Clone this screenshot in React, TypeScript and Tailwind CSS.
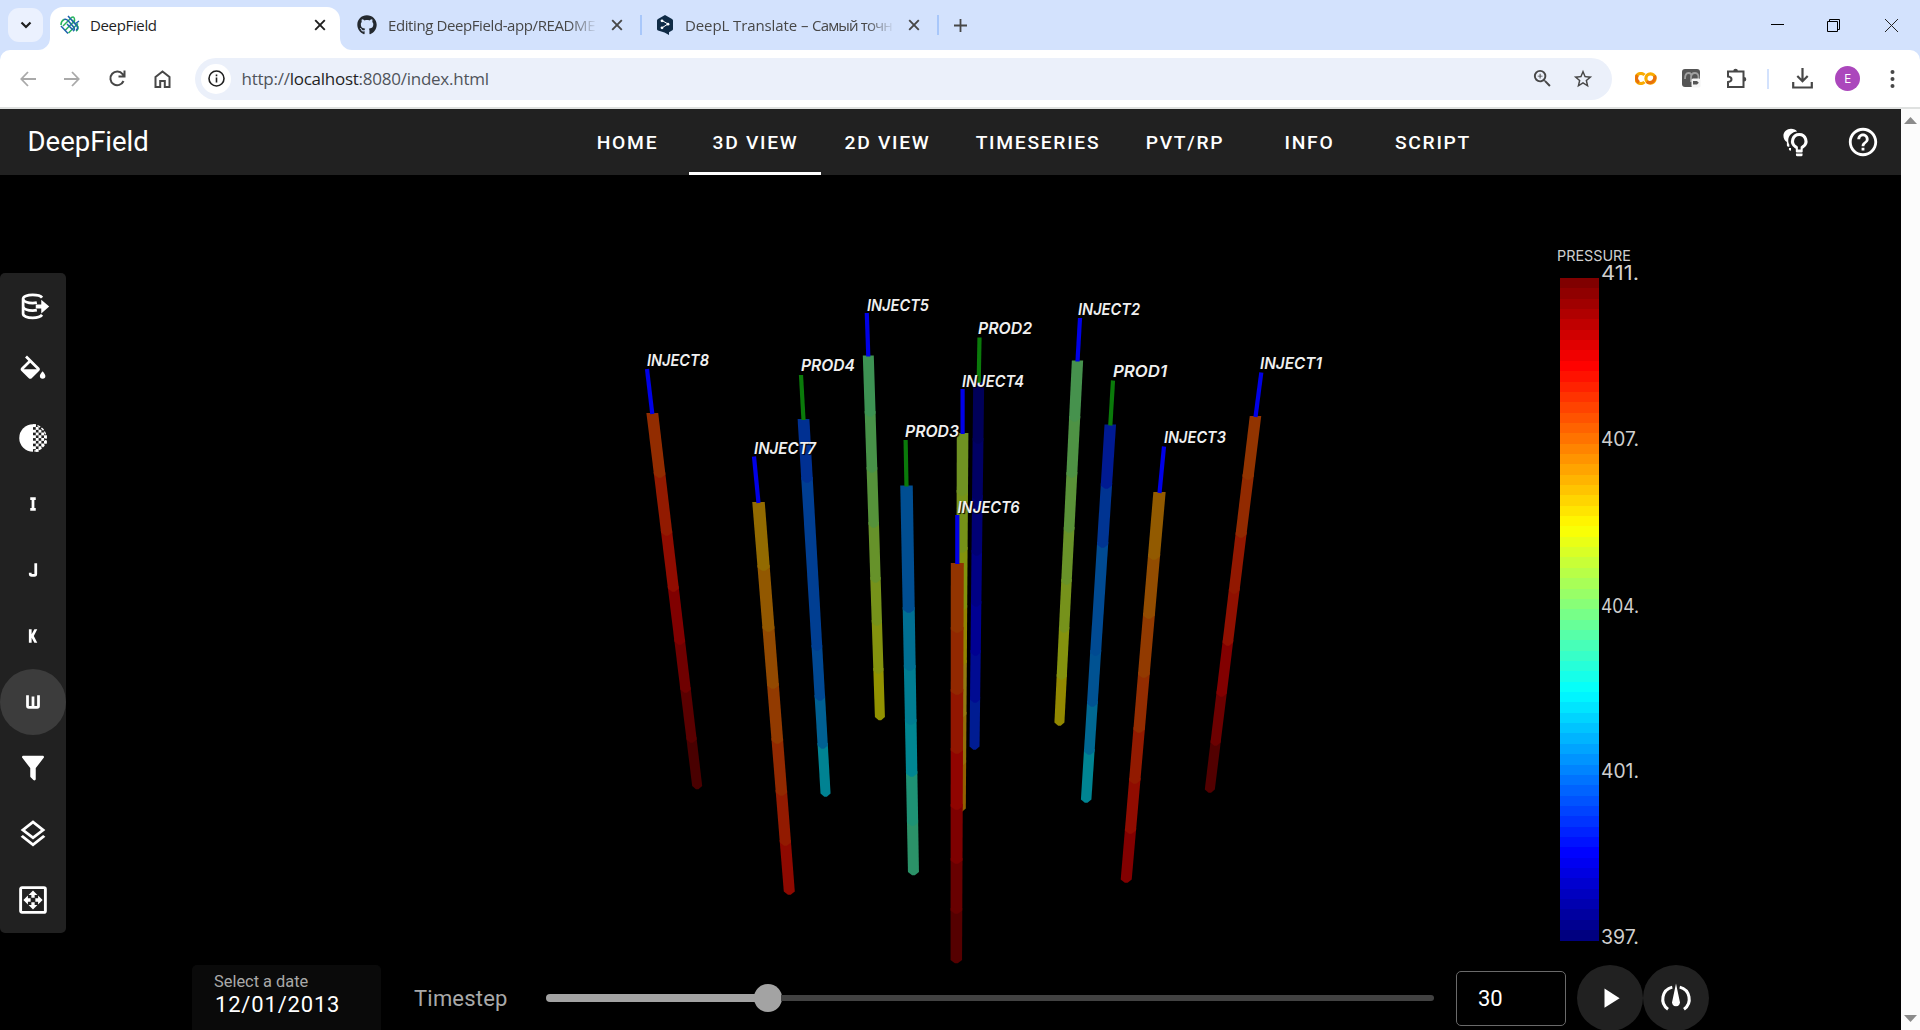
import React from "react";
import { MdZoomIn, MdStarBorder, MdOutlineHelpOutline } from "react-icons/md";
import { FaGithub } from "react-icons/fa";

type Well = {
  name: string;
  label: [number, number];
  stem: [number, number];
  top: [number, number];
  bottom: [number, number];
  widths: [number, number];
  breaks: number[];
  colors: string[];
};

const WELLS: Well[] = [
  { name: "PROD2", label: [978, 334], stem: [979.5, 337.5], top: [978.7, 382], bottom: [974.5, 749], widths: [11, 10], breaks: [443, 500, 555, 606, 655, 702], colors: ["#000058", "#000064", "#000074", "#000084", "#000092", "#000b92", "#001c92"] },
  { name: "INJECT4", label: [962, 387], stem: [962.6, 389], top: [962.6, 433], bottom: [960.8, 811], widths: [11.6, 10], breaks: [495, 552, 610, 665, 717, 765], colors: ["#6f9222", "#769218", "#82920c", "#928400", "#927a10", "#926e08", "#926000"] },
  { name: "PROD1", label: [1113, 377], stem: [1113, 380.5], top: [1110.3, 424.5], bottom: [1086, 802], widths: [11.5, 10.5], breaks: [488, 547, 655, 706, 754], colors: ["#001a92", "#003492", "#004a92", "#005292", "#006892", "#008492"] },
  { name: "INJECT2", label: [1078, 315], stem: [1080, 318], top: [1077.5, 360.5], bottom: [1059.3, 725], widths: [11.3, 10], breaks: [421, 477, 532, 584, 632, 679], colors: ["#46924d", "#4e9244", "#5a9238", "#699228", "#76921b", "#84920e", "#928800"] },
  { name: "INJECT1", label: [1260, 369], stem: [1261.3, 372.5], top: [1255.5, 416], bottom: [1209.5, 792], widths: [11.5, 10], breaks: [479, 537, 593, 645, 696, 745], colors: ["#923400", "#922a00", "#921800", "#901000", "#820000", "#6c0000", "#520000"] },
  { name: "INJECT5", label: [867, 311], stem: [866.8, 313], top: [868.3, 355.5], bottom: [880, 719.5], widths: [11, 10], breaks: [416, 472, 527, 582, 625, 673], colors: ["#3d9253", "#479248", "#55923a", "#66922a", "#76921a", "#84920e", "#929200"] },
  { name: "PROD4", label: [801, 371], stem: [801, 375], top: [803.5, 419], bottom: [825.7, 796], widths: [11.8, 10], breaks: [482, 650, 700, 748], colors: ["#003092", "#003e92", "#004892", "#006092", "#008292"] },
  { name: "INJECT8", label: [647, 366], stem: [647, 369], top: [652.3, 413], bottom: [697.5, 788.5], widths: [11.8, 10], breaks: [477, 535, 591, 644, 692, 742], colors: ["#922c00", "#921a00", "#900c00", "#800000", "#6f0000", "#5a0000", "#490000"] },
  { name: "INJECT3", label: [1164, 443], stem: [1164, 446.5], top: [1159.5, 492], bottom: [1126, 882], widths: [12.3, 11], breaks: [559, 618, 677, 732, 783, 833], colors: ["#925a00", "#924c00", "#923a00", "#922c00", "#921a00", "#900c00", "#820000"] },
  { name: "INJECT7", label: [754, 454], stem: [754, 456.5], top: [758.5, 502], bottom: [789.5, 894], widths: [12.5, 11], breaks: [570, 631, 688, 743, 795, 845], colors: ["#926a00", "#925800", "#924900", "#923a00", "#922900", "#921a00", "#8e0900"] },
  { name: "PROD3", label: [905, 437], stem: [905.6, 440], top: [906.5, 485.5], bottom: [913.5, 874.5], widths: [12.5, 11], breaks: [612, 670, 724, 776, 825], colors: ["#004e92", "#006f92", "#007d92", "#008692", "#1e9274", "#2b9268"] },
  { name: "INJECT6", label: [957.5, 513], stem: [957.3, 515], top: [957.3, 563], bottom: [956.3, 962.5], widths: [13, 11.5], breaks: [632, 694, 753, 809, 863, 913], colors: ["#923400", "#922800", "#921600", "#900400", "#7e0000", "#680000", "#550000"] },
];

const TOP = 175;

function jet(t: number) {
  const c = (v: number) => Math.round(255 * Math.max(0, Math.min(1, v)));
  return `rgb(${c(1.5 - Math.abs(4 * t - 3))},${c(1.5 - Math.abs(4 * t - 2))},${c(1.5 - Math.abs(4 * t - 1))})`;
}

function WellShape({ w }: { w: Well }) {
  const [tx, ty] = w.top;
  const [bx, by] = w.bottom;
  const at = (y: number) => {
    const k = (y - ty) / (by - ty);
    return { x: tx + (bx - tx) * k, h: (w.widths[0] + (w.widths[1] - w.widths[0]) * k) / 2 };
  };
  const edges = [ty, ...w.breaks, by];
  const parts = w.colors.map((color, i) => {
    const y0 = i === 0 ? ty : edges[i] - 5;
    const y1 = edges[i + 1];
    const a = at(y0);
    const b = at(y1 - 2.5);
    return (
      <path
        key={i}
        fill={color}
        d={`M${a.x - a.h} ${y0}H${a.x + a.h}L${b.x + b.h} ${y1 - 2.5}L${b.x + b.h * 0.25} ${y1 + 0.8}H${b.x - b.h * 0.25}L${b.x - b.h} ${y1 - 2.5}Z`}
      />
    );
  });
  const stemColor = w.name.startsWith("PROD") ? "#0a7a0a" : "#0000e6";
  return (
    <g>
      {parts.reverse()}
      <line x1={w.stem[0]} y1={w.stem[1]} x2={tx} y2={ty + 1} stroke={stemColor} strokeWidth={4.2} />
    </g>
  );
}

function Scene() {
  const ticks: [string, number][] = [["411.", 280], ["407.", 446], ["404.", 612.5], ["401.", 777.5], ["397.", 944]];
  const edge = (i: number) => Math.round(278 + (i * 662.5) / 64);
  return (
    <svg className="absolute inset-0" width="1901" height="855" viewBox={`0 ${TOP} 1901 855`}>
      {WELLS.map((w) => (
        <WellShape key={w.name} w={w} />
      ))}
      <g className="[text-shadow:1px_1px_1px_#000]" fontFamily="Inter, 'Liberation Sans', sans-serif" fontWeight="600" fontStyle="italic" fontSize="16.4" fill="#f0f0f0">
        {WELLS.map((w) => (
          <text key={w.name} x={w.label[0]} y={w.label[1]} textLength={w.name.startsWith("P") ? 54 : 62} lengthAdjust="spacingAndGlyphs">{w.name}</text>
        ))}
      </g>
      {Array.from({ length: 64 }, (_, i) => (
        <rect key={i} x="1560" y={edge(i)} width="39" height={edge(i + 1) - edge(i)} fill={jet((63 - i) / 63)} shapeRendering="crispEdges" />
      ))}
      <g fontFamily="Inter, 'Liberation Sans', sans-serif" fill="#cfcfcf">
        <text x="1557" y="261" fontSize="15" textLength="74" lengthAdjust="spacingAndGlyphs">PRESSURE</text>
        {ticks.map(([t, y]) => (
          <text key={t} x="1601" y={y} fontSize="19.5" textLength="38" lengthAdjust="spacingAndGlyphs">{t}</text>
        ))}
      </g>
    </svg>
  );
}

const ICON_BOX = "-0.364 -0.364 24.728 24.728";

function Mdi({ d }: { d: string }) {
  return (
    <svg width="34" height="34" viewBox={ICON_BOX} fill="currentColor" fillRule="evenodd">
      <path d={d} />
    </svg>
  );
}

function DatabaseExport() {
  return (
    <svg width="34" height="34" viewBox={ICON_BOX} fill="none" stroke="currentColor" strokeWidth="2">
      <path d="M18.6 5.900C17.600 4.600 15 3.900 11.800 3.900 7.800 3.900 4.800 5.100 4.800 6.800V17.600c0 1.700 3 3 7 3 3.200 0 5.800-.8 6.800-2.100" />
      <path d="M4.800 7.400c.9 1.600 3.700 2.500 7 2.500 1 0 2-.1 3-.3M4.800 12.800c.9 1.600 3.700 2.500 7 2.500 1 0 2-.1 3-.3" />
      <path d="M14 10.900h4V7.400L23.800 12.400 18 17.400v-3.500h-4z" fill="currentColor" stroke="none" />
    </svg>
  );
}

function Opacity() {
  const dots: [number, number][] = [];
  for (let r = 0; r < 10; r++)
    for (let c = 0; c < 5; c++) if ((r + c) % 2 === 0) dots.push([12 + c * 2, 2 + r * 2]);
  return (
    <svg width="34" height="34" viewBox={ICON_BOX} fill="currentColor">
      <path d="M12 2a10 10 0 0 0 0 20z" />
      <path d="M12 2.500a9.500 9.500 0 0 1 0 19" fill="none" stroke="currentColor" strokeWidth="1" strokeDasharray="2.200 1.100" />
      {dots.filter(([x, y]) => Math.hypot(x + 1 - 12, y + 1 - 12) < 9.8).map(([x, y]) => (
        <rect key={`${x}-${y}`} x={x} y={y} width="2.100" height="2.100" />
      ))}
    </svg>
  );
}

function Recenter() {
  return (
    <svg width="34" height="34" viewBox={ICON_BOX} fill="currentColor">
      <rect x="3" y="3" width="18" height="18" rx="1" fill="none" stroke="currentColor" strokeWidth="2.1" />
      <path d="M12 5l3.200 3.300h-2v2h-2.400v-2h-2zM12 19l3.200-3.300h-2v-2h-2.400v2h-2zM5 12l3.300-3.200v2h2v2.400h-2v2zM19 12l-3.300-3.200v2h-2v2.400h2v2z" />
    </svg>
  );
}

const SIDE: React.ReactNode[] = [
  <DatabaseExport />,
  <Mdi d="M19,11.5C19,11.5 17,13.67 17,15A2,2 0 0,0 19,17A2,2 0 0,0 21,15C21,13.67 19,11.5 19,11.5M5.21,10L10,5.21L14.79,10M16.56,8.94L7.62,0L6.21,1.41L8.59,3.79L3.44,8.94C2.85,9.5 2.85,10.47 3.44,11.06L8.94,16.56C9.23,16.85 9.62,17 10,17C10.38,17 10.77,16.85 11.06,16.56L16.56,11.06C17.15,10.47 17.15,9.5 16.56,8.94Z" />,
  <Opacity />,
  <Mdi d="M10,7V9H11V15H10V17H14V15H13V9H14V7H10Z" />,
  <Mdi d="M11,17A2,2 0 0,1 9,15V14H11V15H13V7H15V15A2,2 0 0,1 13,17H11Z" />,
  <Mdi d="M9,7H11V10.700L13,7H15.100L12.600,12L15.100,17H13L11,13.300V17H9Z" />,
  <Mdi d="M9,17A2,2 0 0,1 7,15V7H9V15H11V8H13V15H15V7H17V15A2,2 0 0,1 15,17H9Z" />,
  <Mdi d="M14,12V19.88C14.04,20.18 13.94,20.5 13.71,20.71C13.32,21.1 12.69,21.1 12.3,20.71L10.29,18.7C10.06,18.47 9.96,18.16 10,17.87V12H9.97L4.21,4.62C3.87,4.19 3.95,3.56 4.38,3.22C4.57,3.08 4.78,3 5,3V3H19V3C19.22,3 19.43,3.08 19.62,3.22C20.05,3.56 20.13,4.19 19.79,4.62L14.03,12H14Z" />,
  <Mdi d="M12,18.54L19.37,12.8L21,14.07L12,21.07L3,14.07L4.62,12.81L12,18.54M12,16L3,9L12,2L21,9L12,16M12,4.53L6.26,9L12,13.47L17.74,9L12,4.53Z" />,
  <Recenter />,
];

function Close({ dark }: { dark?: boolean }) {
  return (
    <svg className="shrink-0" width="12" height="12" viewBox="0 0 12 12" stroke={dark ? "#1f1f1f" : "#474747"} strokeWidth="1.900">
      <path d="M1.200 1.200l9.600 9.600M10.800 1.200L1.200 10.800" />
    </svg>
  );
}

function TabStrip() {
  return (
    <div className="flex h-[50px] bg-[#d3e2fd] text-[15px] text-[#474747]">
      <div className="mt-2 ml-2 flex h-[34px] w-[35px] items-center justify-center rounded-[11px] bg-[#ebf1fe]">
        <svg width="12" height="8" viewBox="0 0 12 8" fill="none" stroke="#1f1f1f" strokeWidth="2.200"><path d="M1.500 1.500L6 6l4.500-4.500" /></svg>
      </div>
      <div className="relative mt-[7px] ml-[7px] flex h-[43px] w-[290px] items-center rounded-t-[13px] bg-white pr-[14px] pb-[7px] pl-[10px] text-[#1f1f1f]">
        <svg className="absolute bottom-0 -left-3" width="12" height="12"><path d="M12 0v12H0A12 12 0 0 0 12 0" fill="#fff" /></svg>
        <svg className="absolute -right-3 bottom-0" width="12" height="12"><path d="M0 0v12h12A12 12 0 0 1 0 0" fill="#fff" /></svg>
        <svg width="20" height="20" viewBox="0 0 20 20" fill="none" strokeWidth="1.500">
          <g stroke="#27b45c"><path d="M3 11L11.500 2.500q2.500-1.500 3 1.500t-2 4L5 15.500M8.500 18l9.500-9.500M1 10q0-4 3-5.500M12 5l6 6.500q.5 3-2 4.500" /></g>
          <g stroke="#1f63ad"><path d="M8 1l9 10q1.500 3-1 4M4 4.500q2-1 4 1l6 7q1 3-1 3.500M1 11l7 7.500M7 9l6 6M15 9l4-3" /></g>
        </svg>
        <span className="ml-[10px] grow tracking-[-0.35px]">DeepField</span>
        <Close dark />
      </div>
      <div className="flex h-[50px] grow items-center">
        <FaGithub className="ml-[17px] shrink-0 text-[#24292f]" size={20} />
        <div className="ml-[11px] w-[210px] overflow-hidden whitespace-nowrap [mask-image:linear-gradient(to_right,black_86%,transparent)] tracking-[-0.4px]">Editing DeepField-app/README</div>
        <div className="ml-[13px]"><Close /></div>
        <div className="ml-[17px] h-5 w-[2px] bg-[#a8c7fa]" />
        <svg className="ml-[15px]" width="16" height="20" viewBox="0 0 16 20">
          <path d="M8 0l7 4q1 .6 1 1.600v8.400q0 1-1 1.600L12 17.300V20l-4.500-2.600L1 15.600Q0 15 0 14V5.600Q0 4.600 1 4z" fill="#0f2b46" />
          <path d="M5 5.500l6 3.500-6 3.800" fill="none" stroke="#fff" strokeWidth="1" />
          <g fill="#fff"><circle cx="5" cy="5.800" r="1.400" /><circle cx="11" cy="9.200" r="1.400" /><circle cx="5" cy="12.800" r="1.400" /></g>
        </svg>
        <div className="ml-[12px] w-[210px] overflow-hidden whitespace-nowrap [mask-image:linear-gradient(to_right,black_86%,transparent)] tracking-[-0.1px]">DeepL Translate – <span className="tracking-[-0.85px]">Самый точн</span></div>
        <div className="ml-[13px]"><Close /></div>
        <div className="ml-[17px] h-5 w-[2px] bg-[#a8c7fa]" />
        <svg className="ml-[15px]" width="13" height="13" stroke="#474747" strokeWidth="1.800"><path d="M6.500 0v13M0 6.500h13" /></svg>
        <div className="ml-auto flex items-center pr-[22px]">
          <svg width="13" height="13" stroke="#000"><path d="M0 5.500h13" /></svg>
          <svg className="ml-[43px]" width="13" height="13" fill="none" stroke="#000"><path d="M.5 2.500h10v10H.5zM2.500 2.500v-2h10v10h-2" /></svg>
          <svg className="ml-[45px]" width="13" height="13" stroke="#222"><path d="M0 0l13 13M13 0L0 13" /></svg>
        </div>
      </div>
    </div>
  );
}

function Toolbar() {
  return (
    <div className="bg-[#d3e2fd]">
      <div className="flex h-[57px] items-center rounded-t-[10px] bg-white text-[#474747]">
        <svg className="ml-5" width="16" height="16" fill="none" stroke="#a9a9a9" strokeWidth="1.800"><path d="M16 8H1.500M8 1L1.300 8 8 15" /></svg>
        <svg className="ml-7" width="16" height="16" fill="none" stroke="#a9a9a9" strokeWidth="1.800"><path d="M0 8h14.500M8 1l6.700 7L8 15" /></svg>
        <svg className="ml-[29px]" width="17" height="17" fill="none" stroke="#474747" strokeWidth="2"><path d="M14.500 11A6.800 6.800 0 1 1 13.600 4.200L15 6M15.500 0.500v6H9.500" /></svg>
        <svg className="ml-[28px]" width="17" height="18" fill="none" stroke="#474747" strokeWidth="2"><path d="M1.500 7L8.500 1.500l7 5.500v10h-4.700v-6H6.200v6H1.500z" /></svg>
        <div className="ml-[24px] flex h-[42px] w-[1417px] items-center rounded-full bg-[#ebf0fa] pr-[18px] pl-[6px]">
          <div className="flex size-[30px] items-center justify-center rounded-full bg-white">
            <svg width="17" height="17" fill="none" stroke="#1f1f1f" strokeWidth="1.600"><circle cx="8.500" cy="8.500" r="7.500" /><path d="M8.500 7.500v5M8.500 4.500v1.700" /></svg>
          </div>
          <span className="ml-[10.500px] grow pt-px text-[17px] tracking-[-0.25px] whitespace-nowrap text-[#50545a]">http://<span className="text-[#1f1f1f]">localhost</span>:8080/index.html</span>
          <MdZoomIn size={23} />
          <MdStarBorder className="ml-[18px]" size={22} />
        </div>
        <svg className="ml-[23px]" width="22" height="13" fill="none" strokeWidth="3.200">
          <path d="M9.500 10A5 5 0 1 1 9.500 3" stroke="#f9ab00" /><circle cx="15.500" cy="6.500" r="4.600" stroke="#f9ab00" /><path d="M19.500 3.600A5 5 0 0 1 11.800 9.400M2.500 3.200A5 5 0 0 0 4 10.500" stroke="#e8710a" />
        </svg>
        <svg className="ml-[25px]" width="19" height="19"><rect width="18" height="18" rx="3" fill="#555" /><path d="M3 10Q3 4 6.500 4T9 8v5M9 9q0-5 4-5t3.500 6" fill="none" stroke="#a0a0a0" strokeWidth="1.800" /><rect x="9.500" y="9.500" width="9" height="9" rx="1.500" fill="#f4f4f4" /><path d="M11 12h4l1.800 1.800L15 15.500h-4z" fill="#555" /></svg>
        <svg className="ml-[25px]" width="21" height="21" viewBox="0 0 21 21" fill="none" stroke="#474747" strokeWidth="2"><path d="M2 3.500h15.500v15.500H2v-5q3.500-.5 3.500-2.800T2 8.500z" /><path d="M7.300 3a2.300 2.300 0 0 1 4.600 0zM18 9a2.300 2.300 0 0 1 0 4.600z" fill="#474747" stroke="none" /></svg>
        <div className="ml-[20px] h-5 w-[2px] bg-[#d3e2fd]" />
        <svg className="ml-[23px]" width="21" height="21" fill="none" stroke="#474747" strokeWidth="2.200"><path d="M10.500 0v13M5.300 8l5.200 5.200L15.700 8M1.200 14v5.500h18.600V14" /></svg>
        <div className="ml-[22px] flex size-[25px] items-center justify-center rounded-full bg-[#ab47bc] text-[13px] text-white">E</div>
        <svg className="ml-[30px]" width="5" height="20" fill="#474747"><circle cx="2.500" cy="3" r="2" /><circle cx="2.500" cy="10" r="2" /><circle cx="2.500" cy="17" r="2" /></svg>
      </div>
      <div className="h-[2px] bg-[#dfe1e0]" />
    </div>
  );
}

const TABS: [string, string][] = [
  ["HOME", "w-[124px]"],
  ["3D VIEW", "w-[132px]"],
  ["2D VIEW", "w-[132px]"],
  ["TIMESERIES", "w-[169px]"],
  ["PVT/RP", "w-[125px]"],
  ["INFO", "w-[124px]"],
  ["SCRIPT", "w-[123px]"],
];

function AppBar() {
  return (
    <header className="flex h-[66px] items-center bg-[#212121] text-white">
      <h1 className="w-[565px] pl-[27.500px] text-[27.5px] leading-none">DeepField</h1>
      <nav className="flex h-full">
        {TABS.map(([t, w]) => (
          <div key={t} className={`${w} flex h-full items-center justify-center border-b-[3px] pt-[5px] pl-px text-[19.25px] font-medium tracking-[1.72px] ${t === "3D VIEW" ? "border-white" : "border-transparent"}`}>
            {t}
          </div>
        ))}
      </nav>
      <svg className="ml-auto" width="33" height="33" viewBox="0 0 24 24" fill="currentColor">
        <path d="M8 2C5 2 2.500 4.300 2.500 7.100c0 2 1 3.600 2.500 4.600V14c0 .6.400 1 1 1h.8v-1.300C6.300 12.600 6 11.800 6 10.600 6 6.800 9 4.300 12.400 4 11.600 2.700 10 2 8 2zM6.500 16v1q0 .8.800.9L8 18v-2z" />
        <path fillRule="evenodd" d="M14 5a6 6 0 0 0-3.300 11l.8.600V18.500q0 .7.700.7h3.600q.7 0 .7-.7V16.600l.8-.6A6 6 0 0 0 14 5zm0 2.200a3.800 3.800 0 0 1 2 7l-1 .9v2h-2v-2l-1-.9a3.800 3.800 0 0 1 2-7zM11.600 20h4.800v1q0 1-1 1h-2.800q-1 0-1-1z" />
      </svg>
      <MdOutlineHelpOutline className="mr-[21px] ml-[33px]" size={34} />
    </header>
  );
}

function BottomBar() {
  return (
    <div className="relative mt-auto -mb-px flex h-[66px] items-center text-[#a9a9a9]">
      <div className="ml-[192px] h-full w-[189px] rounded-t-[5px] bg-[#0a0a0a] pt-[8px] pl-[22px]">
        <div className="text-[16.4px] leading-[17px]">Select a date</div>
        <div className="mt-[3px] pl-[1px] text-[22px] leading-[24px] tracking-[0.82px] text-white">12/01/2013</div>
      </div>
      <span className="ml-[33px] w-[132px] text-[22px] tracking-[0.2px]">Timestep</span>
      <div className="flex w-[888px] items-center">
        <div className="h-[8px] w-[210px] rounded-l-full bg-[#a3a3a3]" />
        <div className="-ml-[2px] size-[28px] rounded-full bg-[#a3a3a3]" />
        <div className="-ml-[1px] h-[6px] grow rounded-r-full bg-[#424242]" />
      </div>
      <div className="ml-[22px] flex h-[55px] w-[110px] items-center rounded-[5px] border border-[#6a6a6a] pl-[21px] text-[22px] text-white">30</div>
      <div className="ml-[11px] flex size-[66px] shrink-0 items-center justify-center rounded-full bg-[#212121] text-white">
        <Mdi d="M8,5.14V19.14L19,12.14L8,5.14Z" />
      </div>
      <div className="flex size-[66px] shrink-0 items-center justify-center rounded-full bg-[#212121] text-white">
        <svg width="34" height="34" viewBox={ICON_BOX}>
          <path d="M12 1.500l2.600 12.400a2.900 2.900 0 1 1-5.200 0z" fill="#fff" />
          <path d="M9.300 4.100A9 9 0 0 0 6.200 20.200M14.700 4.100A9 9 0 0 1 17.800 20.200" fill="none" stroke="#fff" strokeWidth="2.200" />
        </svg>
      </div>
    </div>
  );
}

export default function App() {
  return (
    <div className="flex h-[1030px] w-[1920px] flex-col overflow-hidden bg-black font-['Open_Sans','Noto_Sans',sans-serif]">
      <TabStrip />
      <Toolbar />
      <div className="flex h-[921px]">
        <div className="flex w-[1901px] flex-col font-['Roboto',sans-serif]">
          <AppBar />
          <main className="relative flex grow flex-col bg-black">
            <Scene />
            <aside className="absolute top-[98px] left-0 flex w-[66px] flex-col rounded-[5px] bg-[#212121] text-white">
              {SIDE.map((icon, i) => (
                <div key={i} className={`flex size-[66px] items-center justify-center rounded-full ${i === 6 ? "bg-[#3c3c3c]" : ""}`}>{icon}</div>
              ))}
            </aside>
            <BottomBar />
          </main>
        </div>
        <div className="flex w-[19px] flex-col items-center justify-between bg-[#fcfcfc] py-[8px]">
          <svg width="13" height="7" fill="#8b8b8b"><path d="M6.500 0L13 7H0z" /></svg>
          <svg width="13" height="7" fill="#8b8b8b"><path d="M6.500 7L13 0H0z" /></svg>
        </div>
      </div>
    </div>
  );
}
